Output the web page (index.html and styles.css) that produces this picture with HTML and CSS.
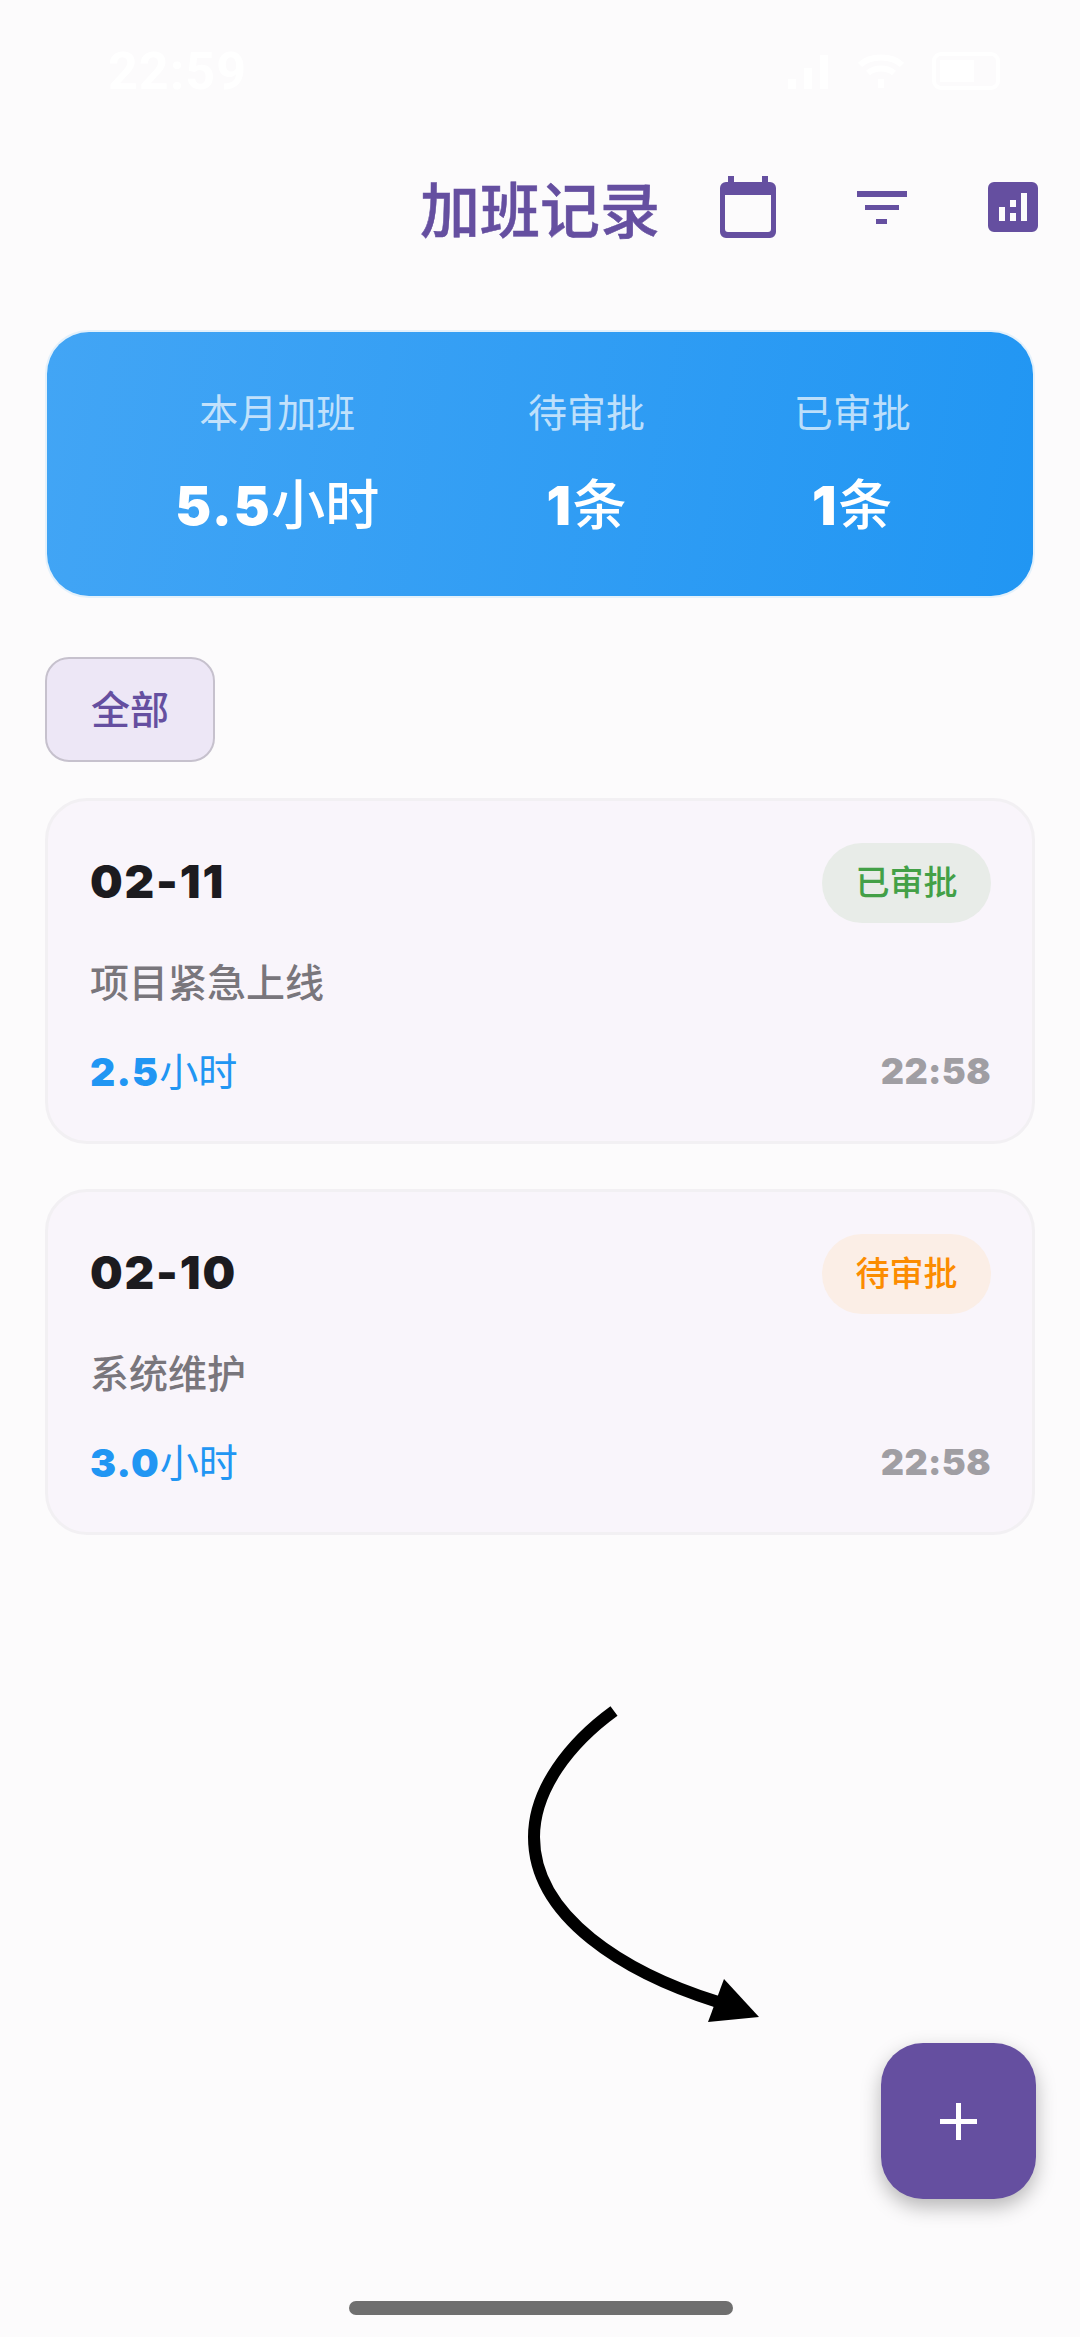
FILE: index.html
```html
<!DOCTYPE html>
<html>
<head>
    <title>加班记录</title>
    <link rel="stylesheet" href="styles.css">
</head>
<body>
    <div class="page">
        <div class="status-bar">
            <span class="clock">22:59</span>
            <div class="status-icons">
                <svg width="42" height="36" viewBox="0 0 42 36"><path d="M0 26h8v10H0zM16 15h8v21h-8zM32 2h8v34h-8z" fill="#fff"/></svg>
                <svg width="46" height="36" viewBox="0 0 46 36"><path d="M2 12C12 2 34 2 44 12M10 20c7-6 19-6 26 0M23 26v9" fill="none" stroke="#fff" stroke-width="6"/></svg>
                <svg width="68" height="38" viewBox="0 0 68 38"><rect x="2" y="2" width="64" height="34" rx="7" fill="none" stroke="#fff" stroke-width="4"/><rect x="8" y="8" width="34" height="22" fill="#fff"/></svg>
            </div>
        </div>

        <header class="top-bar">
            <h1 class="title">加班记录</h1>
            <div class="actions">
                <svg class="icon-calendar" width="56" height="62" viewBox="0 0 56 62">
                    <path d="M8 0h6v6h28V0h6v6h2a6 6 0 0 1 6 6v44a6 6 0 0 1-6 6H6a6 6 0 0 1-6-6V12a6 6 0 0 1 6-6h2zM5 19v34a3 3 0 0 0 3 3h40a3 3 0 0 0 3-3V19z" fill="#654fa0" fill-rule="evenodd"/>
                </svg>
                <svg class="icon-filter" width="50" height="33" viewBox="0 0 50 33">
                    <path d="M0 0h50v6H0zM8 14h34v5H8zM19 28h11v5H19z" fill="#654fa0"/>
                </svg>
                <svg class="icon-stats" width="50" height="50" viewBox="0 0 50 50">
                    <path d="M6 0h38a6 6 0 0 1 6 6v38a6 6 0 0 1-6 6H6a6 6 0 0 1-6-6V6a6 6 0 0 1 6-6zM11 25v14h6V25zM22 31v8h6v-8zM22 18v7h6v-7zM33 11v28h6V11z" fill="#654fa0" fill-rule="evenodd"/>
                </svg>
            </div>
        </header>

        <section class="summary">
            <div class="summary-item">
                <div class="summary-label">本月加班</div>
                <div class="summary-value"><b>5.5</b>小时</div>
            </div>
            <div class="summary-item">
                <div class="summary-label">待审批</div>
                <div class="summary-value"><b>1</b>条</div>
            </div>
            <div class="summary-item">
                <div class="summary-label">已审批</div>
                <div class="summary-value"><b>1</b>条</div>
            </div>
        </section>

        <div class="chips">
            <button class="chip">全部</button>
        </div>

        <div class="record-list">
            <div class="record">
                <div class="record-head">
                    <span class="record-date">02-11</span>
                    <span class="badge approved">已审批</span>
                </div>
                <div class="record-reason">项目紧急上线</div>
                <div class="record-foot">
                    <span class="record-hours"><b>2.5</b>小时</span>
                    <span class="record-time">22:58</span>
                </div>
            </div>
            <div class="record">
                <div class="record-head">
                    <span class="record-date">02-10</span>
                    <span class="badge pending">待审批</span>
                </div>
                <div class="record-reason">系统维护</div>
                <div class="record-foot">
                    <span class="record-hours"><b>3.0</b>小时</span>
                    <span class="record-time">22:58</span>
                </div>
            </div>
        </div>

        <svg class="arrow" width="260" height="340" viewBox="0 0 260 340">
            <path d="M114 6C70 38 34 84 34 132C34 212 125 268 218 297" fill="none" stroke="#000" stroke-width="12"/>
            <path d="M259 312L224 274L208 317z" fill="#000"/>
        </svg>

        <button class="fab">
            <svg width="37" height="37" viewBox="0 0 37 37"><path d="M16 0h5v16h16v5H21v16h-5V21H0v-5h16z" fill="#fff"/></svg>
        </button>

        <div class="home-bar"></div>
    </div>
</body>
</html>
```

FILE: styles.css
```css
* {
    box-sizing: border-box;
}
body {
    margin: 0;
    background-color: #fcfbfc;
    font-family: "Noto Sans CJK SC", sans-serif;
}
b {
    font-family: Inter, sans-serif;
    font-weight: 900;
    letter-spacing: 0.03em;
}
.page {
    position: relative;
    width: 1080px;
    height: 2337px;
    overflow: hidden;
    padding: 0 45px;
}
.status-bar {
    display: flex;
    justify-content: space-between;
    align-items: center;
    height: 172px;
    padding: 0 35px 30px 63px;
    color: #fff;
}
.clock {
    font-family: Roboto, sans-serif;
    font-size: 52px;
    font-weight: 700;
    letter-spacing: 1px;
}
.status-icons {
    display: flex;
    align-items: center;
    gap: 28px;
}
.top-bar {
    display: flex;
    justify-content: flex-end;
    align-items: center;
    height: 70px;
    margin: 0 -3px 90px 0;
}
.title {
    margin: 0 60px 0 0;
    font-size: 60px;
    font-weight: 500;
    line-height: 70px;
    color: #654fa0;
    -webkit-text-stroke: 0.5px #654fa0;
}
.actions {
    display: flex;
    align-items: center;
    gap: 81px;
}
.summary {
    display: flex;
    justify-content: space-around;
    height: 264px;
    padding: 54px 48px 0 54px;
    margin: 0 2px 61px;
    border-radius: 42px;
    background: linear-gradient(100deg, #42a5f5, #2196f3);
    box-shadow: 0 0 0 2px #e4f1fb;
}
.summary-item {
    text-align: center;
}
.summary-label {
    font-size: 39px;
    line-height: 48px;
    color: rgba(255, 255, 255, 0.7);
}
.summary-value {
    margin-top: 35px;
    font-size: 54px;
    font-weight: 500;
    line-height: 66px;
    color: #fff;
}
.chips {
    display: flex;
    margin-bottom: 36px;
}
.chip {
    width: 170px;
    height: 105px;
    padding: 0 0 5px;
    border: 2px solid #c6c1cd;
    border-radius: 24px;
    background-color: #ede7f6;
    font-family: inherit;
    font-size: 39px;
    font-weight: 500;
    color: #654fa0;
}
.record-list {
    display: flex;
    flex-direction: column;
    gap: 45px;
}
.record {
    height: 346px;
    padding: 42px 41px 0 42px;
    border: 3px solid #f2f0f3;
    border-radius: 42px;
    background-color: #f9f5fb;
}
.record-head,
.record-foot {
    display: flex;
    justify-content: space-between;
    align-items: center;
}
.record-head {
    height: 80px;
}
.record-date {
    font-family: Inter, sans-serif;
    font-size: 46px;
    font-weight: 900;
    letter-spacing: 0.04em;
    color: #1c1b1f;
    margin-top: -4px;
}
.badge {
    width: 169px;
    height: 80px;
    border-radius: 40px;
    font-size: 34px;
    font-weight: 500;
    line-height: 76px;
    text-align: center;
}
.approved {
    background-color: #e8ece8;
    color: #43a047;
}
.pending {
    background-color: #fbeee6;
    color: #fb8c00;
}
.record-reason {
    margin-top: 28px;
    font-size: 39px;
    font-weight: 500;
    line-height: 58px;
    color: #79767c;
}
.record-foot {
    margin-top: 31px;
}
.record-hours {
    font-size: 39px;
    line-height: 58px;
    color: #2196f3;
}
.record-time {
    font-family: Inter, sans-serif;
    font-size: 36px;
    font-weight: 900;
    letter-spacing: 0.01em;
    color: #a09ea3;
}
.arrow {
    position: absolute;
    left: 500px;
    top: 1705px;
}
.fab {
    position: absolute;
    left: 881px;
    top: 2043px;
    display: flex;
    justify-content: center;
    align-items: center;
    width: 155px;
    height: 156px;
    border: none;
    border-radius: 42px;
    background-color: #654fa0;
    box-shadow: 0 8px 20px rgba(0, 0, 0, 0.28);
}
.home-bar {
    position: absolute;
    left: 349px;
    top: 2301px;
    width: 384px;
    height: 14px;
    border-radius: 7px;
    background-color: #6f6f6f;
}
```
